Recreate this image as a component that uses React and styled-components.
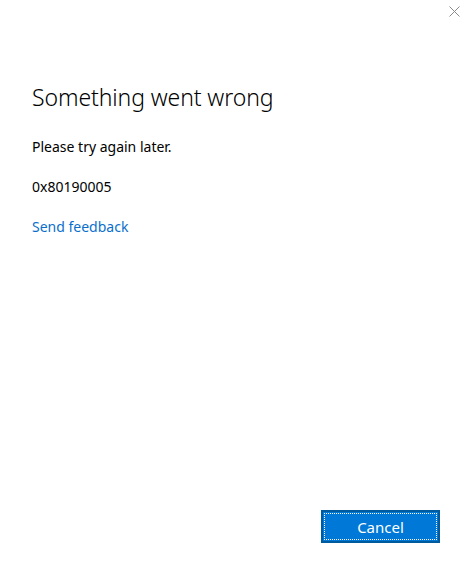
import styled, { createGlobalStyle } from "styled-components";

const GlobalStyle = createGlobalStyle`
  html, body {
    margin: 0;
    padding: 0;
    background: #ffffff;
  }
  body {
    font-family: "Noto Sans", "Open Sans", sans-serif;
    color: #000000;
  }
`;

const Dialog = styled.div`
  position: relative;
  display: flex;
  flex-direction: column;
  box-sizing: border-box;
  width: 469px;
  height: 579px;
  padding: 80px 29px 36px 32px;
`;

const Close = styled.button`
  position: absolute;
  top: 4px;
  right: 8px;
  width: 14px;
  height: 14px;
  padding: 0;
  border: none;
  background: transparent;
  display: flex;
  align-items: center;
  justify-content: center;
  cursor: pointer;
`;

const Title = styled.h1`
  margin: 0;
  font-family: "Noto Sans", sans-serif;
  font-weight: 300;
  font-size: 23px;
  line-height: 34px;
  color: #000000;
  letter-spacing: -0.1px;
`;

const Text = styled.p`
  margin: ${(p) => p.$top || 0}px 0 0;
  font-size: 14px;
  line-height: 20px;
`;

const Link = styled.a`
  display: inline-block;
  margin-top: 20px;
  font-size: 14px;
  line-height: 20px;
  color: #0a6fcc;
  text-decoration: none;
  cursor: pointer;
`;

const Footer = styled.div`
  margin-top: auto;
  display: flex;
  justify-content: flex-end;
`;

const CancelButton = styled.button`
  width: 119px;
  height: 33px;
  box-sizing: border-box;
  border: 2px solid #005a9e;
  background: #0078d7;
  color: #ffffff;
  font-family: "Noto Sans", sans-serif;
  font-size: 15px;
  cursor: pointer;
  outline: 1px dotted #ffffff;
  outline-offset: -4px;
`;

export default function App() {
  return (
    <>
      <GlobalStyle />
      <Dialog>
        <Close aria-label="Close">
          <svg width="11" height="11" viewBox="0 0 11 11">
            <path d="M0.5 0.5 L10.5 10.5 M10.5 0.5 L0.5 10.5" stroke="#8a8a8a" strokeWidth="1" fill="none" />
          </svg>
        </Close>
        <Title>Something went wrong</Title>
        <Text $top={23}>Please try again later.</Text>
        <Text $top={20}>0x80190005</Text>
        <div>
          <Link>Send feedback</Link>
        </div>
        <Footer>
          <CancelButton>Cancel</CancelButton>
        </Footer>
      </Dialog>
    </>
  );
}
